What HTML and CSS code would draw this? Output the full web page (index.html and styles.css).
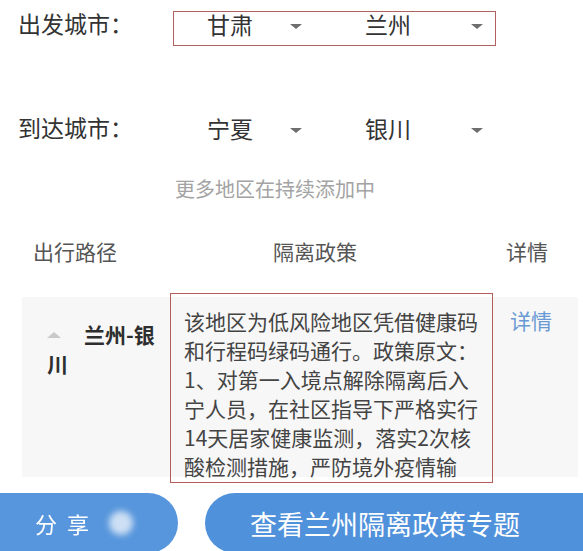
FILE: index.html
```html
<!DOCTYPE html>
<html lang="zh-CN">
<head>
    <meta charset="UTF-8">
    <meta name="viewport" content="width=device-width, initial-scale=1.0">
    <title>隔离政策查询</title>
    <link rel="stylesheet" href="styles.css">
</head>
<body>
    <div class="city-row depart">
        <span class="city-label">出发城市：</span>
        <div class="city-picks boxed">
            <span class="pick-value">甘肃</span><span class="caret"></span>
            <span class="pick-value second">兰州</span><span class="caret last"></span>
        </div>
    </div>

    <div class="city-row arrive">
        <span class="city-label">到达城市：</span>
        <div class="city-picks">
            <span class="pick-value">宁夏</span><span class="caret"></span>
            <span class="pick-value second">银川</span><span class="caret last"></span>
        </div>
    </div>

    <p class="more-tip">更多地区在持续添加中</p>

    <div class="route-table">
        <div class="table-head">
            <span class="head-route">出行路径</span>
            <span class="head-policy">隔离政策</span>
            <span class="head-detail">详情</span>
        </div>

        <div class="table-row">
            <div class="route-cell"><span class="fold-arrow"></span>兰州-银川</div>
            <div class="policy-cell">
                <div class="policy-text">该地区为低风险地区凭借健康码和行程码绿码通行。政策原文：1、对第一入境点解除隔离后入宁人员，在社区指导下严格实行14天居家健康监测，落实2次核酸检测措施，严防境外疫情输入。</div>
            </div>
            <a class="detail-cell" href="#">详情</a>
        </div>
    </div>

    <div class="action-bar">
        <button class="share-btn">分享<span class="share-dot"></span></button>
        <button class="topic-btn">查看兰州隔离政策专题</button>
    </div>
</body>
</html>
```

FILE: styles.css
```css
html, body {
    margin: 0;
    padding: 0;
    overflow: hidden;
}
body {
    font-family: "Noto Sans CJK SC", "Liberation Serif", sans-serif;
    background-color: #fff;
    color: #333;
    width: 583px;
    height: 551px;
}
.city-row {
    display: flex;
    align-items: flex-start;
    height: 35px;
}
.depart {
    margin-top: 11px;
}
.arrive {
    margin-top: 69px;
}
.city-label {
    box-sizing: border-box;
    width: 173px;
    padding-left: 18px;
    font-size: 23px;
    line-height: 24px;
    color: #333;
}
.city-picks {
    box-sizing: border-box;
    display: flex;
    align-items: flex-start;
    width: 323px;
    height: 35px;
    padding-left: 33px;
    border: 1px solid transparent;
}
.city-picks.boxed {
    border-color: #b0615f;
}
.pick-value {
    font-size: 23px;
    line-height: 24px;
    color: #333;
}
.pick-value.second {
    margin-left: 63px;
}
.caret {
    width: 0;
    height: 0;
    margin-left: 37px;
    margin-top: 12px;
    border-left: 6px solid transparent;
    border-right: 6px solid transparent;
    border-top: 5px solid #6e6e6e;
}
.caret.last {
    margin-left: 60px;
}
.more-tip {
    margin: 29px 0 0;
    padding-left: 175px;
    font-size: 20px;
    line-height: 20px;
    color: #a3a3a3;
}
.route-table {
    margin-left: 22px;
    width: 556px;
}
.table-head {
    display: grid;
    grid-template-columns: 148px 323px 1fr;
    margin-top: 42px;
    font-size: 21px;
    line-height: 21px;
    color: #555;
}
.head-route {
    padding-left: 11px;
}
.head-policy {
    padding-left: 103px;
}
.head-detail {
    padding-left: 13px;
}
.table-row {
    display: grid;
    grid-template-columns: 148px 323px 1fr;
    height: 180px;
    margin-top: 35px;
    background-color: #f7f7f7;
    font-size: 21px;
    line-height: 29px;
}
.route-cell {
    padding: 23px 0 0 25px;
    font-weight: bold;
    color: #2e2e2e;
}
.fold-arrow {
    display: inline-block;
    width: 0;
    height: 0;
    margin-right: 23px;
    vertical-align: 5px;
    border-left: 7px solid transparent;
    border-right: 7px solid transparent;
    border-bottom: 6px solid #c9c9c9;
}
.policy-cell {
    box-sizing: border-box;
    align-self: start;
    height: 190px;
    margin-top: -4px;
    padding: 13px 0 0 13px;
    border: 1px solid #b35c5a;
    overflow: hidden;
    color: #444;
}
.policy-text {
    width: 295px;
}
.detail-cell {
    padding: 9px 0 0 17px;
    color: #6a9ad4;
    text-decoration: none;
}
.action-bar {
    display: flex;
    height: 60px;
    margin-top: 16px;
}
.share-btn, .topic-btn {
    border: none;
    background-color: #4f91db;
    color: #fff;
    font-family: inherit;
    display: flex;
    align-items: center;
    padding: 0;
}
.share-btn {
    width: 208px;
    margin-left: -30px;
    padding-left: 65px;
    border-radius: 30px;
    font-size: 22px;
    letter-spacing: 10px;
    opacity: 0.95;
}
.share-dot {
    width: 24px;
    height: 24px;
    margin-left: 10px;
    border-radius: 50%;
    background-color: rgba(255, 255, 255, 0.7);
    filter: blur(3px);
}
.topic-btn {
    flex: 1;
    margin-left: 27px;
    margin-right: -17px;
    padding-left: 45px;
    border-radius: 30px 0 0 30px;
    font-size: 27px;
}
```
